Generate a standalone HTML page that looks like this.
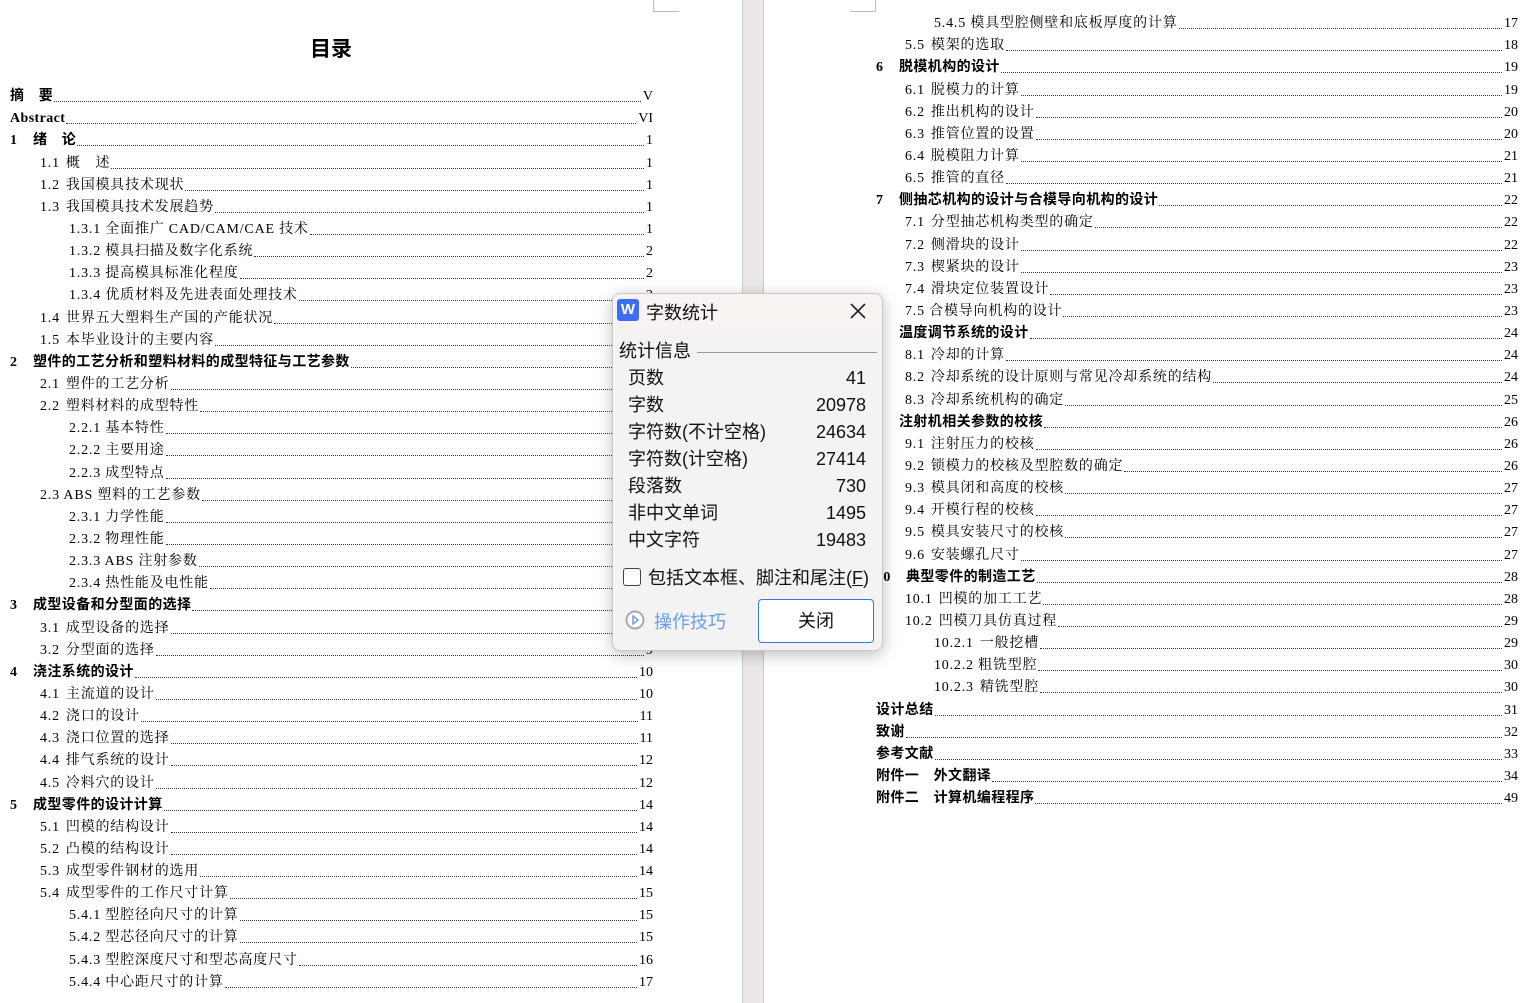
<!DOCTYPE html>
<html><head><meta charset="utf-8"><style>
body{margin:0;width:1535px;height:1003px;overflow:hidden;background:#fff;position:relative;font-family:"Liberation Serif","Noto Serif CJK SC",serif;font-size:14px;color:#000}
.gap{position:absolute;left:742px;top:0;width:20px;height:1003px;background:#ece8e8;border-left:1px solid #ccc;border-right:1px solid #ccc}
.mk{position:absolute;border-color:#bbb;border-style:solid;width:25px;height:11px}
.col{position:absolute}
.r{display:flex;align-items:flex-end;height:22.15px;line-height:22px;white-space:nowrap;letter-spacing:0.8px}
.r i{flex:1;border-bottom:1.5px dotted #333;margin:0 2px 6px 1px}
.r b{font-weight:normal;letter-spacing:0}
.r s{text-decoration:none;display:inline-block;width:6px}
.h{font-weight:bold;font-family:"Liberation Serif","Noto Sans CJK SC",sans-serif;letter-spacing:0.4px}
.h .n{display:inline-block;width:23px}
.dlg{position:absolute;left:612px;top:293px;width:269px;height:356px;background:#f3f3f3;border:1px solid #c8c8c8;border-radius:8px;box-shadow:0 4px 16px rgba(0,0,0,.25);font-family:"Liberation Sans","Noto Sans CJK SC",sans-serif;color:#111;overflow:hidden}
.hd{height:36px;background:#f8f2f0;position:relative}
.st{position:absolute;left:15px;width:238px;display:flex;justify-content:space-between;font-size:18px;height:27px;line-height:27px}
</style></head><body>
<div class="gap"></div>
<div class="mk" style="left:653px;top:0;border-width:0 0 1px 1px;"></div>
<div class="mk" style="left:850px;top:0;border-width:0 1px 1px 0;"></div>
<div style="position:absolute;left:310px;top:33px;font-size:21px;font-weight:bold;font-family:'Noto Sans CJK SC',sans-serif">目录</div>

<div class="col" style="left:10px;top:86px;width:643px">
<div class="r h">摘　要<i></i><b>V</b></div>
<div class="r h">Abstract<i></i><b>VI</b></div>
<div class="r h"><span class="n">1</span>绪　论<i></i><b>1</b></div>
<div class="r" style="padding-left:30px">1.1<s></s> 概　述<i></i><b>1</b></div>
<div class="r" style="padding-left:30px">1.2<s></s> 我国模具技术现状<i></i><b>1</b></div>
<div class="r" style="padding-left:30px">1.3<s></s> 我国模具技术发展趋势<i></i><b>1</b></div>
<div class="r" style="padding-left:59px">1.3.1 全面推广 CAD/CAM/CAE 技术<i></i><b>1</b></div>
<div class="r" style="padding-left:59px">1.3.2 模具扫描及数字化系统<i></i><b>2</b></div>
<div class="r" style="padding-left:59px">1.3.3 提高模具标准化程度<i></i><b>2</b></div>
<div class="r" style="padding-left:59px">1.3.4 优质材料及先进表面处理技术<i></i><b>2</b></div>
<div class="r" style="padding-left:30px">1.4<s></s> 世界五大塑料生产国的产能状况<i></i><b>3</b></div>
<div class="r" style="padding-left:30px">1.5<s></s> 本毕业设计的主要内容<i></i><b>3</b></div>
<div class="r h"><span class="n">2</span>塑件的工艺分析和塑料材料的成型特征与工艺参数<i></i><b>4</b></div>
<div class="r" style="padding-left:30px">2.1<s></s> 塑件的工艺分析<i></i><b>4</b></div>
<div class="r" style="padding-left:30px">2.2<s></s> 塑料材料的成型特性<i></i><b>5</b></div>
<div class="r" style="padding-left:59px">2.2.1 基本特性<i></i><b>5</b></div>
<div class="r" style="padding-left:59px">2.2.2 主要用途<i></i><b>5</b></div>
<div class="r" style="padding-left:59px">2.2.3 成型特点<i></i><b>5</b></div>
<div class="r" style="padding-left:30px">2.3 ABS 塑料的工艺参数<i></i><b>6</b></div>
<div class="r" style="padding-left:59px">2.3.1 力学性能<i></i><b>6</b></div>
<div class="r" style="padding-left:59px">2.3.2 物理性能<i></i><b>6</b></div>
<div class="r" style="padding-left:59px">2.3.3 ABS 注射参数<i></i><b>7</b></div>
<div class="r" style="padding-left:59px">2.3.4 热性能及电性能<i></i><b>7</b></div>
<div class="r h"><span class="n">3</span>成型设备和分型面的选择<i></i><b>8</b></div>
<div class="r" style="padding-left:30px">3.1<s></s> 成型设备的选择<i></i><b>8</b></div>
<div class="r" style="padding-left:30px">3.2<s></s> 分型面的选择<i></i><b>9</b></div>
<div class="r h"><span class="n">4</span>浇注系统的设计<i></i><b>10</b></div>
<div class="r" style="padding-left:30px">4.1<s></s> 主流道的设计<i></i><b>10</b></div>
<div class="r" style="padding-left:30px">4.2<s></s> 浇口的设计<i></i><b>11</b></div>
<div class="r" style="padding-left:30px">4.3<s></s> 浇口位置的选择<i></i><b>11</b></div>
<div class="r" style="padding-left:30px">4.4<s></s> 排气系统的设计<i></i><b>12</b></div>
<div class="r" style="padding-left:30px">4.5<s></s> 冷料穴的设计<i></i><b>12</b></div>
<div class="r h"><span class="n">5</span>成型零件的设计计算<i></i><b>14</b></div>
<div class="r" style="padding-left:30px">5.1<s></s> 凹模的结构设计<i></i><b>14</b></div>
<div class="r" style="padding-left:30px">5.2<s></s> 凸模的结构设计<i></i><b>14</b></div>
<div class="r" style="padding-left:30px">5.3<s></s> 成型零件钢材的选用<i></i><b>14</b></div>
<div class="r" style="padding-left:30px">5.4<s></s> 成型零件的工作尺寸计算<i></i><b>15</b></div>
<div class="r" style="padding-left:59px">5.4.1 型腔径向尺寸的计算<i></i><b>15</b></div>
<div class="r" style="padding-left:59px">5.4.2 型芯径向尺寸的计算<i></i><b>15</b></div>
<div class="r" style="padding-left:59px">5.4.3 型腔深度尺寸和型芯高度尺寸<i></i><b>16</b></div>
<div class="r" style="padding-left:59px">5.4.4 中心距尺寸的计算<i></i><b>17</b></div>
</div>

<div class="col" style="left:876px;top:13px;width:642px">
<div class="r" style="padding-left:58px">5.4.5 模具型腔侧壁和底板厚度的计算<i></i><b>17</b></div>
<div class="r" style="padding-left:29px">5.5<s></s> 模架的选取<i></i><b>18</b></div>
<div class="r h"><span class="n">6</span>脱模机构的设计<i></i><b>19</b></div>
<div class="r" style="padding-left:29px">6.1<s></s> 脱模力的计算<i></i><b>19</b></div>
<div class="r" style="padding-left:29px">6.2<s></s> 推出机构的设计<i></i><b>20</b></div>
<div class="r" style="padding-left:29px">6.3<s></s> 推管位置的设置<i></i><b>20</b></div>
<div class="r" style="padding-left:29px">6.4<s></s> 脱模阻力计算<i></i><b>21</b></div>
<div class="r" style="padding-left:29px">6.5<s></s> 推管的直径<i></i><b>21</b></div>
<div class="r h"><span class="n">7</span>侧抽芯机构的设计与合模导向机构的设计<i></i><b>22</b></div>
<div class="r" style="padding-left:29px">7.1<s></s> 分型抽芯机构类型的确定<i></i><b>22</b></div>
<div class="r" style="padding-left:29px">7.2<s></s> 侧滑块的设计<i></i><b>22</b></div>
<div class="r" style="padding-left:29px">7.3<s></s> 楔紧块的设计<i></i><b>23</b></div>
<div class="r" style="padding-left:29px">7.4<s></s> 滑块定位装置设计<i></i><b>23</b></div>
<div class="r" style="padding-left:29px">7.5 合模导向机构的设计<i></i><b>23</b></div>
<div class="r h"><span class="n">8</span>温度调节系统的设计<i></i><b>24</b></div>
<div class="r" style="padding-left:29px">8.1<s></s> 冷却的计算<i></i><b>24</b></div>
<div class="r" style="padding-left:29px">8.2<s></s> 冷却系统的设计原则与常见冷却系统的结构<i></i><b>24</b></div>
<div class="r" style="padding-left:29px">8.3<s></s> 冷却系统机构的确定<i></i><b>25</b></div>
<div class="r h"><span class="n">9</span>注射机相关参数的校核<i></i><b>26</b></div>
<div class="r" style="padding-left:29px">9.1<s></s> 注射压力的校核<i></i><b>26</b></div>
<div class="r" style="padding-left:29px">9.2<s></s> 锁模力的校核及型腔数的确定<i></i><b>26</b></div>
<div class="r" style="padding-left:29px">9.3<s></s> 模具闭和高度的校核<i></i><b>27</b></div>
<div class="r" style="padding-left:29px">9.4<s></s> 开模行程的校核<i></i><b>27</b></div>
<div class="r" style="padding-left:29px">9.5<s></s> 模具安装尺寸的校核<i></i><b>27</b></div>
<div class="r" style="padding-left:29px">9.6<s></s> 安装螺孔尺寸<i></i><b>27</b></div>
<div class="r h"><span class="n" style="width:30px">10</span>典型零件的制造工艺<i></i><b>28</b></div>
<div class="r" style="padding-left:29px">10.1<s></s> 凹模的加工工艺<i></i><b>28</b></div>
<div class="r" style="padding-left:29px">10.2<s></s> 凹模刀具仿真过程<i></i><b>29</b></div>
<div class="r" style="padding-left:58px">10.2.1<s></s> 一般挖槽<i></i><b>29</b></div>
<div class="r" style="padding-left:58px">10.2.2 粗铣型腔<i></i><b>30</b></div>
<div class="r" style="padding-left:58px">10.2.3<s></s> 精铣型腔<i></i><b>30</b></div>
<div class="r h">设计总结<i></i><b>31</b></div>
<div class="r h">致谢<i></i><b>32</b></div>
<div class="r h">参考文献<i></i><b>33</b></div>
<div class="r h">附件一　外文翻译<i></i><b>34</b></div>
<div class="r h">附件二　计算机编程程序<i></i><b>49</b></div>
</div>

<div class="dlg">
 <div class="hd">
  <div style="position:absolute;left:4px;top:5px;width:22px;height:22px;background:#3d6cf5;border-radius:3px;color:#fff;font-weight:bold;font-size:15px;text-align:center;line-height:22px">W</div>
  <div style="position:absolute;left:33px;top:5px;font-size:18px">字数统计</div>
  <svg style="position:absolute;left:237px;top:9px" width="16" height="16"><path d="M1 1L15 15M15 1L1 15" stroke="#222" stroke-width="1.6"/></svg>
 </div>
 <div style="position:absolute;left:6px;top:43px;font-size:18px">统计信息</div>
 <div style="position:absolute;left:84px;top:58px;width:180px;height:1px;background:#999"></div>
 <div class="st" style="top:71px"><span>页数</span><span>41</span></div>
 <div class="st" style="top:98px"><span>字数</span><span>20978</span></div>
 <div class="st" style="top:125px"><span>字符数(不计空格)</span><span>24634</span></div>
 <div class="st" style="top:152px"><span>字符数(计空格)</span><span>27414</span></div>
 <div class="st" style="top:179px"><span>段落数</span><span>730</span></div>
 <div class="st" style="top:206px"><span>非中文单词</span><span>1495</span></div>
 <div class="st" style="top:233px"><span>中文字符</span><span>19483</span></div>
 <div style="position:absolute;left:10px;top:274px;width:16px;height:16px;border:1.5px solid #444;border-radius:3px;background:#fff"></div>
 <div style="position:absolute;left:35px;top:270px;font-size:18px">包括文本框、脚注和尾注(<u>F</u>)</div>
 <svg style="position:absolute;left:12px;top:316px" width="20" height="20"><circle cx="10" cy="10" r="8.5" fill="#fff" stroke="#aaa" stroke-width="2"/><path d="M8 6L13 10L8 14Z" fill="none" stroke="#6a9cf0" stroke-width="1.5"/></svg>
 <div style="position:absolute;left:41px;top:314px;font-size:18px;color:#6a9cf0">操作技巧</div>
 <div style="position:absolute;left:145px;top:305px;width:114px;height:42px;border:1px solid #2f7ad8;border-radius:4px;background:#fff;text-align:center;line-height:42px;font-size:18px">关闭</div>
</div>
</body></html>
